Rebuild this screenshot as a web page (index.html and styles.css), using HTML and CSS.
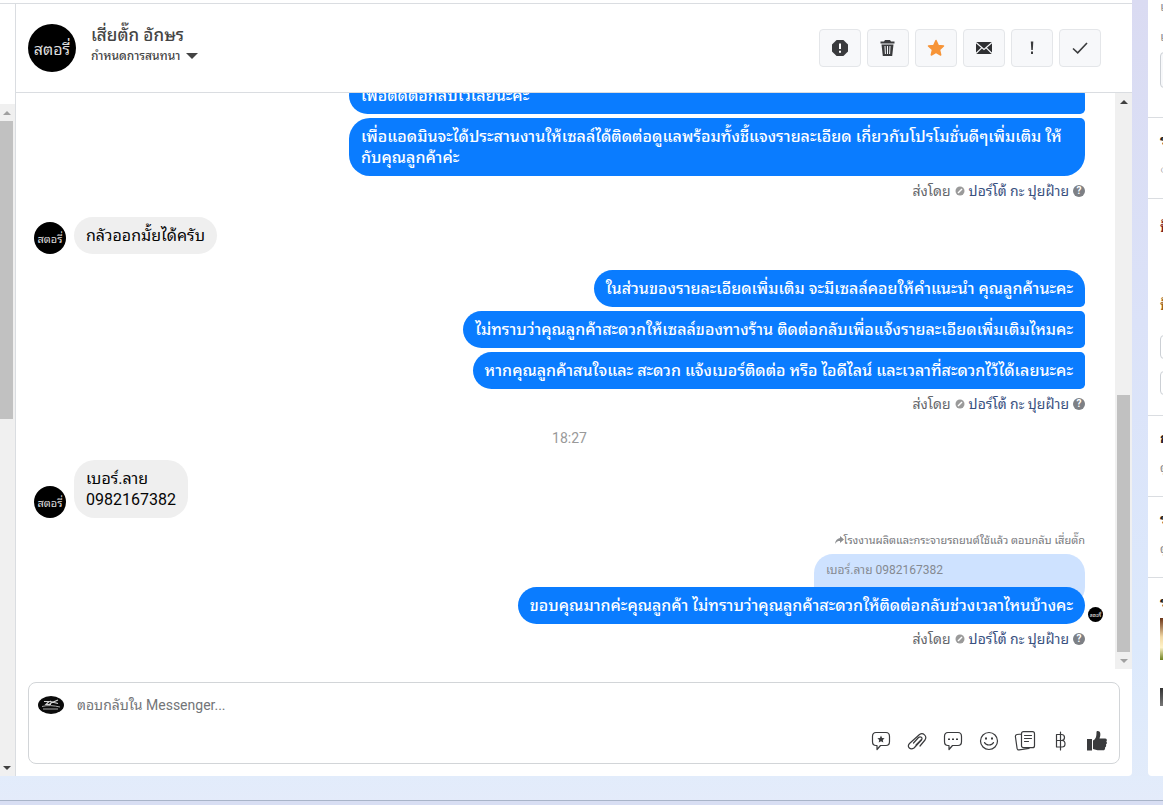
FILE: index.html
```
<!DOCTYPE html>
<html lang="th">
<head>
<meta charset="utf-8">
<title>Messenger</title>
<link rel="stylesheet" href="styles.css">
</head>
<body>
<div class="workspace">
  <aside class="list-edge">
    <div class="scrollbar list-scroll">
      <span class="arrow up muted"></span>
      <span class="thumb list-thumb"></span>
      <span class="rest list-rest"></span>
      <span class="arrow down"></span>
    </div>
  </aside>

  <main class="chat">
    <header class="chat-header">
      <div class="avatar avatar-lg">สตอรี่</div>
      <div class="contact">
        <h1 class="contact-name">เสี่ยตั๊ก อักษร</h1>
        <button class="assign" type="button">กำหนดการสนทนา <span class="caret"></span></button>
      </div>
      <div class="actions">
        <button class="action" type="button" aria-label="Spam"><svg width="18" height="18" viewBox="0 0 18 18"><path fill="#3a3b3d" d="M5.600 1h6.800L17 5.600v6.800L12.400 17H5.600L1 12.400V5.600z"/><path d="M9 4.500v5.500M9 11.800v1.900" stroke="#fff" stroke-width="2"/></svg></button>
        <button class="action" type="button" aria-label="Delete"><svg width="18" height="18" viewBox="0 0 18 18"><path fill="#3a3b3d" d="M6 1h5l1 1.500h3.500V4.500h-14V2.500H5zM2.500 5.500h12l-1.300 11.500H3.800z"/><path d="M6 7l.4 8M8.500 7v8M11 7l-.4 8" stroke="#f7f8fa" stroke-width="1"/></svg></button>
        <button class="action" type="button" aria-label="Follow up"><svg width="18" height="18" viewBox="0 0 18 18"><path fill="#f79437" stroke="#f79437" stroke-width="1.500" stroke-linejoin="round" d="M9 1.500l2.200 4.900 5.300.6-4 3.600 1.200 5.400L9 13.300 4.300 16l1.200-5.400-4-3.600 5.300-.6z"/></svg></button>
        <button class="action" type="button" aria-label="Mark as unread"><svg width="18" height="18" viewBox="0 0 18 18"><path fill="#2f3032" d="M1 3h16v12H1z"/><path d="M1 3.500l8 7 8-7M1 14.500l5.700-5.700M17 14.500l-5.700-5.700" fill="none" stroke="#f7f8fa" stroke-width="1.200"/></svg></button>
        <button class="action" type="button" aria-label="Priority"><svg width="18" height="18" viewBox="0 0 18 18"><path fill="#3a3b3d" d="M7.800 2.500h2.500l-.5 8.500H8.300zM8 12.500h2v2.500H8z"/></svg></button>
        <button class="action" type="button" aria-label="Done"><svg width="18" height="18" viewBox="0 0 18 18"><path d="M2 9.500l4.700 4.300L16 4" fill="none" stroke="#3a3b3d" stroke-width="1.600"/></svg></button>
      </div>
    </header>

    <div class="thread-wrap">
      <section class="thread">
        <div class="group out">
          <p class="bubble first wide">เพื่อติดต่อกลับไว้เลยนะคะ</p>
          <p class="bubble last wide">เพื่อแอดมินจะได้ประสานงานให้เซลล์ได้ติดต่อดูแลพร้อมทั้งชี้แจงรายละเอียด เกี่ยวกับโปรโมชั่นดีๆเพิ่มเติม ให้<br>กับคุณลูกค้าค่ะ</p>
          <p class="sender">ส่งโดย <svg width="10" height="10" viewBox="0 0 10 10"><circle cx="5" cy="5" r="4.500" fill="#9a9a9a"/><path d="M3 7l4-4" stroke="#fff" stroke-width="1.500"/></svg> <a class="page-link" href="#">ปอร์โต้ กะ ปุยฝ้าย</a> <span class="help">?</span></p>
        </div>

        <div class="group in">
          <div class="avatar avatar-sm">สตอรี่</div>
          <p class="bubble">กลัวออกมั้ยได้ครับ</p>
        </div>

        <div class="group out">
          <p class="bubble first">ในส่วนของรายละเอียดเพิ่มเติม จะมีเซลล์คอยให้คำแนะนำ คุณลูกค้านะคะ</p>
          <p class="bubble middle">ไม่ทราบว่าคุณลูกค้าสะดวกให้เซลล์ของทางร้าน ติดต่อกลับเพื่อแจ้งรายละเอียดเพิ่มเติมไหมคะ</p>
          <p class="bubble middle">หากคุณลูกค้าสนใจและ สะดวก แจ้งเบอร์ติดต่อ หรือ ไอดีไลน์ และเวลาที่สะดวกไว้ได้เลยนะคะ</p>
          <p class="sender">ส่งโดย <svg width="10" height="10" viewBox="0 0 10 10"><circle cx="5" cy="5" r="4.500" fill="#9a9a9a"/><path d="M3 7l4-4" stroke="#fff" stroke-width="1.500"/></svg> <a class="page-link" href="#">ปอร์โต้ กะ ปุยฝ้าย</a> <span class="help">?</span></p>
        </div>

        <time class="stamp">18:27</time>

        <div class="group in after-stamp">
          <div class="avatar avatar-sm">สตอรี่</div>
          <p class="bubble">เบอร์.ลาย<br>0982167382</p>
        </div>

        <div class="group out reply">
          <p class="reply-label"><svg width="9" height="8" viewBox="0 0 9 8"><path fill="#8d8f92" d="M5 0l4 3.500L5 7V5C3 5 1.500 5.500 0 8c.3-3.500 2-5.500 5-6z"/></svg>โรงงานผลิตและกระจายรถยนต์ใช้แล้ว ตอบกลับ เสี่ยตั๊ก</p>
          <p class="quote">เบอร์.ลาย 0982167382</p>
          <p class="bubble">ขอบคุณมากค่ะคุณลูกค้า ไม่ทราบว่าคุณลูกค้าสะดวกให้ติดต่อกลับช่วงเวลาไหนบ้างคะ<span class="avatar avatar-seen">สตอรี่</span></p>
          <p class="sender">ส่งโดย <svg width="10" height="10" viewBox="0 0 10 10"><circle cx="5" cy="5" r="4.500" fill="#9a9a9a"/><path d="M3 7l4-4" stroke="#fff" stroke-width="1.500"/></svg> <a class="page-link" href="#">ปอร์โต้ กะ ปุยฝ้าย</a> <span class="help">?</span></p>
        </div>
      </section>
      <div class="scrollbar thread-scroll">
        <span class="arrow up"></span>
        <span class="rest thread-rest"></span>
        <span class="thumb thread-thumb"></span>
        <span class="arrow down muted"></span>
      </div>
    </div>

    <form class="composer">
      <div class="compose-line">
        <svg class="page-logo" width="26" height="18" viewBox="0 0 26 18"><ellipse cx="13" cy="9" rx="13" ry="9" fill="#0b0b0b"/><path d="M6 5.500h5l-3 3h5M12 5l2 1.500 6-2.500M11 9l3-3 6 1.500" fill="none" stroke="#d5d5d5" stroke-width="1.200"/><path d="M4 10.500c5-1.500 12-1 18 .5M5 13h15" fill="none" stroke="#aaa" stroke-width="1"/></svg>
        <input class="compose-input" type="text" aria-label="ตอบกลับใน Messenger" placeholder="ตอบกลับใน Messenger...">
      </div>
      <div class="tools">
        <button class="tool" type="button" aria-label="Saved replies"><svg width="20" height="20" viewBox="0 0 20 20"><path class="line" d="M5 1.500h10c2.500 0 3.500 1.500 3.500 4v5c0 2.500-1 4-3.500 4H9.500L6 18.500v-4H5c-2.500 0-3.500-1.500-3.500-4v-5c0-2.500 1-4 3.500-4z"/><path class="solid" d="M10 4.500l1.100 2.400 2.500.3-1.800 1.800.5 2.600L10 10.300l-2.300 1.300.5-2.600-1.800-1.800 2.500-.3z"/></svg></button>
        <button class="tool" type="button" aria-label="Attach file"><svg width="20" height="20" viewBox="0 0 20 20"><path class="line" d="M13 15l5-6c2.500-4-2-8-5.500-5.500l-10 9c-3 3.500 1 7 4.500 4.500l7.500-8c1.500-2.500-1-4-3-2.500L6.500 12M9 14l5.500-5.500"/></svg></button>
        <button class="tool" type="button" aria-label="Quick replies"><svg width="20" height="20" viewBox="0 0 20 20"><path class="line" d="M5 1.500h10c2.500 0 3.500 1.500 3.500 4v5c0 2.500-1 4-3.500 4H9.500L6 18.500v-4H5c-2.500 0-3.500-1.500-3.500-4v-5c0-2.500 1-4 3.500-4z"/><path class="solid" d="M5 7.500h2v1.500H5zM9 7.500h2v1.500H9zM13 7.500h2v1.500h-2z"/></svg></button>
        <button class="tool" type="button" aria-label="Emoji"><svg width="20" height="20" viewBox="0 0 20 20"><circle class="line" cx="10" cy="10" r="8.500"/><path class="line" d="M5.500 11.500c1.500 3.300 7.500 3.300 9 0"/><path class="solid" d="M6 6.500h2v2H6zM12 6.500h2v2h-2z"/></svg></button>
        <button class="tool" type="button" aria-label="Templates"><svg width="22" height="20" viewBox="0 0 22 20"><path class="line" d="M9.500.7h9c1.200 0 2 .8 2 2v12c0 1.200-.8 2-2 2h-9c-1.200 0-2-.8-2-2v-12c0-1.200.8-2 2-2zM10.500 4.500h7M10.500 7.500h7M10.500 10.500h4M7.500 3L3 3.500c-1 .2-1.700.8-1.600 2l1.700 12c.2 1 1 1.600 2 1.400l9.900-1.400v-1"/></svg></button>
        <button class="tool" type="button" aria-label="Payment"><svg width="20" height="20" viewBox="0 0 20 20"><path class="line" d="M5.500 3.500h5c4 0 4 6 0 6h-5zM5.500 9.500h5.500c4 0 4 6.500 0 6.500H5.500zM9.500 1v18"/></svg></button>
        <button class="tool" type="button" aria-label="Like"><svg width="22" height="22" viewBox="0 0 22 22"><path class="solid" d="M1 9h5v11.500H1zM7 10.500c3-1.500 3.500-4 3.500-8.500 0-1.500 3.500-1.500 3.800 1.500.2 2-.3 3.500-.8 5H19c2 0 2.500 2 1.300 3 1 1 .7 2.500-.4 3 .6 1.200.2 2.400-.9 2.900.4 1.600-.5 2.900-2 2.900h-5.500L7 19z"/></svg></button>
      </div>
    </form>
  </main>

  <aside class="details">
    <section class="block b-top"><p class="caption">เ</p><p class="caption">เ</p><div class="box box-lg"></div></section>
    <section class="block b-short"><h2 class="title">ร</h2><p class="caption">○</p></section>
    <section class="block b-labels"><h2 class="title red">ป้</h2><h2 class="title amber">ป้</h2><div class="box"></div><div class="box"></div></section>
    <section class="block b-short"><h2 class="title">ก</h2><p class="caption">ดู</p></section>
    <section class="block b-short"><h2 class="title">ร</h2><p class="caption">ดู</p></section>
    <section class="block b-media"><h2 class="title">ร</h2><div class="photo bright"></div><div class="photo dark"></div></section>
  </aside>
</div>
<footer class="base"></footer>
</body>
</html>
```
FILE: styles.css
```
* { box-sizing: border-box; }

body {
  margin: 0;
  height: 100vh;
  display: flex;
  flex-direction: column;
  overflow: hidden;
  background: linear-gradient(#dadbf2, #dbe2f8 40%, #dce9fc 80%, #e3ecfa);
  font-family: Roboto, "Noto Sans Thai Looped", Loma, Waree, "Noto Sans", sans-serif;
  color: #050505;
}

p, h1, h2 { margin: 0; }
button { font: inherit; border: 0; background: none; padding: 0; color: inherit; }

.workspace { flex: 1; min-height: 0; display: flex; }

/* Conversation list edge */
.list-edge {
  flex: 0 0 15px;
  display: flex;
  padding-top: 100px;
  margin-top: 3px;
  border-top: 1px solid #dadde1;
  background: #fff;
  box-shadow: 0 -3px #fff;
}

.scrollbar {
  display: flex;
  flex-direction: column;
  align-items: center;
  background: #f0f0f0;
}
.list-scroll { width: 15px; padding-right: 2px; }
.thread-scroll { flex: 0 0 17px; }
.thumb { width: 13px; background: #c1c1c1; }
.list-thumb { flex: 298; }
.list-rest { flex: 341; }
.thread-rest { flex: 286; }
.thread-thumb { flex: 257; }

.arrow { flex: 0 0 17px; width: 13px; display: grid; place-items: center; }
.arrow::before {
  content: "";
  border: 4px solid transparent;
  border-top-width: 0;
  border-bottom-color: #404040;
}
.arrow.down::before {
  border-width: 4px 4px 0;
  border-top-color: #404040;
}
.arrow.muted::before { border-top-color: #a0a0a0; border-bottom-color: #a0a0a0; }

/* Chat */
.chat {
  flex: 1;
  min-width: 0;
  margin-top: 3px;
  display: flex;
  flex-direction: column;
  background: #fff;
  border-top: 1px solid #dadde1;
  border-left: 1px solid #dadde1;
  border-bottom-right-radius: 4px;
  box-shadow: 0 -3px #fff;
}

.chat-header {
  flex: 0 0 89px;
  display: flex;
  align-items: center;
  gap: 15px;
  padding: 0 31px 0 12px;
  border-bottom: 1px solid #dadde1;
}

.avatar {
  flex: none;
  display: grid;
  place-items: center;
  border-radius: 50%;
  background: #000;
  color: #ddd;
}
.avatar-lg { width: 48px; height: 48px; font-size: 16px; }
.avatar-sm { width: 32px; height: 32px; font-size: 11px; }

.contact { flex: 1; display: flex; flex-direction: column; align-items: flex-start; padding-bottom: 8px; }
.contact-name { font-size: 17px; line-height: 24px; font-weight: 500; color: #444; }
.assign {
  display: flex;
  align-items: center;
  gap: 6px;
  font-size: 12px;
  line-height: 18px;
  font-weight: 500;
  color: #444;
}
.caret { border: 6px solid transparent; border-top-color: #444; border-bottom: 0; }

.actions { display: flex; gap: 6px; }
.action {
  width: 42px;
  height: 38px;
  display: grid;
  place-items: center;
  border: 1px solid #e4e6e9;
  border-radius: 4px;
  background: #f7f8fa;
}

.thread-wrap { flex: 1; min-height: 0; display: flex; }
.thread {
  flex: 1;
  min-width: 0;
  display: flex;
  flex-direction: column;
  justify-content: flex-end;
  overflow: hidden;
  padding: 0 30px 21px 18px;
}

.group { display: flex; flex: none; }
.out { flex-direction: column; align-items: flex-end; gap: 4px; }
.in { align-items: flex-end; gap: 8px; padding: 17px 0 16px; }
.after-stamp { padding: 13px 0 15px; }

.bubble {
  position: relative;
  padding: 8px 12px;
  border-radius: 19px;
  font-size: 16px;
  line-height: 21px;
}
.in .bubble { background: #efefef; border-radius: 21px; }
.out .bubble { background: #0a7cff; color: #fff; font-weight: 500; }
.out .first { border-radius: 19px 19px 5px 19px; }
.out .middle { border-radius: 19px 5px 5px 19px; }
.out .last { border-radius: 21px 5px 21px 21px; }
.wide { width: 736px; max-width: 100%; }

.sender {
  display: flex;
  align-items: center;
  gap: 4px;
  margin-top: 2px;
  font-size: 14px;
  line-height: 18px;
  color: #65676b;
}
.page-link { color: #385080; text-decoration: none; }
.help {
  width: 12px;
  height: 12px;
  border-radius: 50%;
  background: #7d8085;
  color: #fff;
  font-size: 10px;
  line-height: 12px;
  font-weight: 700;
  text-align: center;
}

.stamp { margin-left: 20px; padding-top: 16px; text-align: center; font-size: 14px; line-height: 18px; color: #999; }

.reply { gap: 0; }
.reply .sender { margin-top: 6px; }
.reply-label { font-size: 11px; line-height: 16px; color: #77797d; margin-bottom: 5px; }
.quote {
  width: 271px;
  height: 52px;
  margin-bottom: -19px;
  padding: 7px 12px;
  border-radius: 19px;
  background: #cee2ff;
  color: #858a92;
  font-size: 12px;
  line-height: 18px;
}
.avatar-seen {
  position: absolute;
  right: -18px;
  bottom: 2px;
  width: 15px;
  height: 15px;
  font-size: 5px;
  line-height: 8px;
}

/* Composer */
.composer {
  flex: 0 0 82px;
  margin: 13px 12px 12px;
  padding: 11px 11px 11px 9px;
  display: flex;
  flex-direction: column;
  justify-content: space-between;
  border: 1px solid #d2d5d8;
  border-radius: 8px;
}
.compose-line { display: flex; align-items: center; gap: 13px; }
.compose-input {
  flex: 1;
  height: 22px;
  border: 0;
  padding: 0;
  outline: 0;
  background: none;
  font: 14px/22px Roboto, "Noto Sans Thai Looped", Loma, Waree, "Noto Sans", sans-serif;
}
.compose-input::placeholder { color: #737578; opacity: 1; }
.tools { display: flex; justify-content: flex-end; gap: 14px; }
.tool { width: 22px; height: 22px; display: grid; place-items: center; }
.line { fill: none; stroke: #3a3b3d; stroke-width: 1.2; stroke-linejoin: round; stroke-linecap: round; }
.solid { fill: #3a3b3d; }

/* Details */
.details {
  flex: 0 0 15px;
  margin-left: 16px;
  overflow: hidden;
  background: #fff;
  border-bottom-left-radius: 4px;
}
.block { padding-left: 12px; border-bottom: 1px solid #dadde1; overflow: hidden; }
.b-top { height: 118px; }
.b-top .caption { line-height: 30px; margin-top: -8px; padding-bottom: 8px; }
.b-short { height: 81px; padding-top: 12px; }
.b-labels { height: 217px; padding-top: 18px; }
.b-media { padding-top: 14px; border: 0; }
.title { font-size: 14px; line-height: 20px; font-weight: 700; color: #222; white-space: nowrap; }
.b-short .title { margin-bottom: 10px; }
.red { color: #7b2222; margin-bottom: 58px; }
.amber { color: #9b6422; margin-bottom: 20px; }
.caption { font-size: 13px; line-height: 20px; color: #8a8d91; white-space: nowrap; }
.box { width: 60px; height: 24px; margin-bottom: 12px; border: 1px solid #ccd0d5; border-radius: 4px; }
.box-lg { height: 36px; background: #f7f8fa; margin-top: -8px; }
.photo { width: 40px; }
.bright { height: 42px; margin: 6px 0 28px; background: linear-gradient(#6b3518, #f2d8a4 45%, #fff3c8 70%, #6c8020); }
.dark { height: 18px; background: linear-gradient(#333, #777); }

/* Bottom band */
.base {
  flex: 0 0 29px;
  border-bottom: 4px solid #d8def3;
  background: linear-gradient(#e2ecfb, #e4ebfa);
}
.base::after { content: ""; display: block; height: 1px; margin-top: 24px; background: #a9b4c8; }
```
